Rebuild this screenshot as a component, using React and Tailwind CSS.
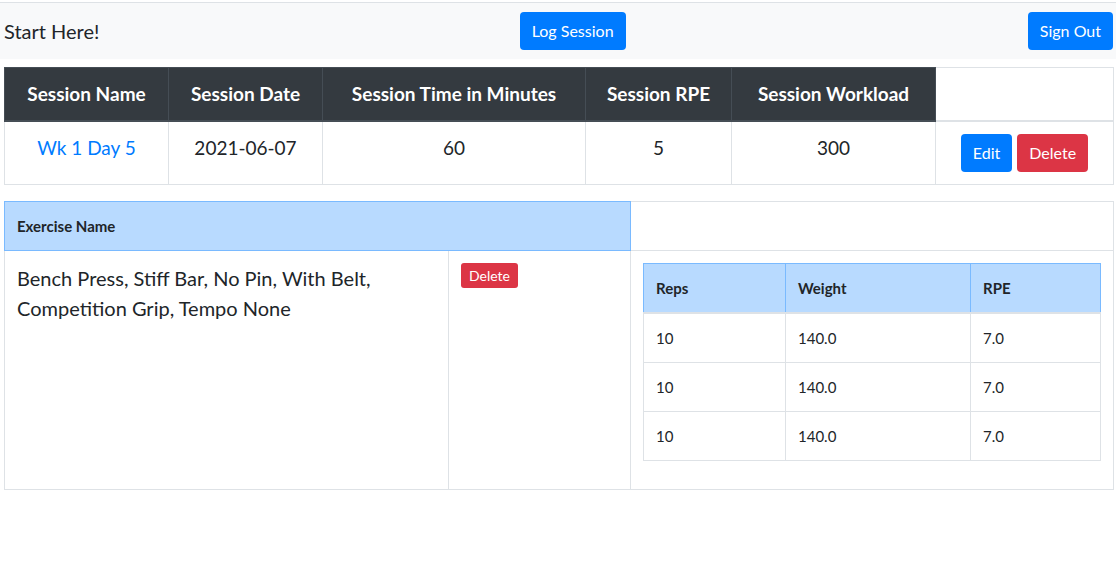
import React from "react";

const font = { fontFamily: "Lato, 'Noto Sans', sans-serif" };

export default function App() {
  const sets = [
    ["10", "140.0", "7.0"],
    ["10", "140.0", "7.0"],
    ["10", "140.0", "7.0"],
  ];
  return (
    <div style={font} className="min-h-[583px] bg-white text-[#212529]">
      <div className="mt-[2px] border-t border-[#dee2e6] bg-[#f8f9fa] h-[57px] pl-1 pr-[3px] flex items-center justify-between">
        <span className="text-[20px] leading-[30px]">Start Here!</span>
        <button className="h-[38px] px-3 rounded-[4px] bg-[#007bff] text-white text-[16px] leading-[24px] ml-[18px]">
          Log Session
        </button>
        <button className="h-[38px] px-3 rounded-[4px] bg-[#007bff] text-white text-[16px] leading-[24px]">
          Sign Out
        </button>
      </div>

      <div className="pl-1 pr-[3px] mt-2">
        <table className="w-[1109px] table-fixed border-collapse text-[19px] leading-[28px] mb-4">
          <colgroup>
            <col className="w-[164px]" />
            <col className="w-[154px]" />
            <col className="w-[263px]" />
            <col className="w-[146px]" />
            <col className="w-[204px]" />
            <col className="w-[178px]" />
          </colgroup>
          <thead>
            <tr>
              {["Session Name", "Session Date", "Session Time in Minutes", "Session RPE", "Session Workload"].map((h) => (
                <th
                  key={h}
                  className="bg-[#343a40] text-white font-bold p-3 border border-[#454d55] border-b-2 text-center align-top"
                >
                  {h}
                </th>
              ))}
              <th className="border border-[#dee2e6] border-b-2 p-3"></th>
            </tr>
          </thead>
          <tbody>
            <tr>
              <td className="border border-[#dee2e6] p-3 text-center align-top">
                <a className="text-[#007bff]">Wk 1 Day 5</a>
              </td>
              <td className="border border-[#dee2e6] p-3 text-center align-top">2021-06-07</td>
              <td className="border border-[#dee2e6] p-3 text-center align-top">60</td>
              <td className="border border-[#dee2e6] p-3 text-center align-top">5</td>
              <td className="border border-[#dee2e6] p-3 text-center align-top">300</td>
              <td className="border border-[#dee2e6] p-3 text-center align-top">
                <div className="flex justify-center gap-[5px]">
                  <button className="h-[38px] px-3 rounded-[4px] bg-[#007bff] text-white text-[16px] leading-[24px]">
                    Edit
                  </button>
                  <button className="h-[38px] px-3 rounded-[4px] bg-[#dc3545] text-white text-[16px] leading-[24px]">
                    Delete
                  </button>
                </div>
              </td>
            </tr>
          </tbody>
        </table>

        <table className="w-[1109px] table-fixed border-collapse text-[15px] leading-[24px]">
          <colgroup>
            <col className="w-[444px]" />
            <col className="w-[182px]" />
            <col className="w-[483px]" />
          </colgroup>
          <thead>
            <tr>
              <th colSpan={2} className="bg-[#b8daff] border border-[#7abaff] p-3 text-left font-bold">
                Exercise Name
              </th>
              <th className="border border-[#dee2e6] p-3"></th>
            </tr>
          </thead>
          <tbody>
            <tr>
              <td className="border border-[#dee2e6] p-3 align-top text-[20px] leading-[30px]">
                Bench Press, Stiff Bar, No Pin, With Belt, Competition Grip, Tempo None
              </td>
              <td className="border border-[#dee2e6] p-3 align-top">
                <button className="h-[25px] px-2 rounded-[3px] bg-[#dc3545] text-white text-[14px] leading-[25px]">
                  Delete
                </button>
              </td>
              <td className="border border-[#dee2e6] p-3 align-top">
                <table className="w-[457px] table-fixed border-collapse mb-4">
                  <colgroup>
                    <col className="w-[142px]" />
                    <col className="w-[185px]" />
                    <col className="w-[130px]" />
                  </colgroup>
                  <thead>
                    <tr>
                      {["Reps", "Weight", "RPE"].map((h) => (
                        <th
                          key={h}
                          className="bg-[#b8daff] border border-[#7abaff] border-b-2 border-b-[#dee2e6] p-3 text-left font-bold"
                        >
                          {h}
                        </th>
                      ))}
                    </tr>
                  </thead>
                  <tbody>
                    {sets.map((r, i) => (
                      <tr key={i}>
                        {r.map((c, j) => (
                          <td key={j} className="border border-[#dee2e6] p-3 align-top">
                            {c}
                          </td>
                        ))}
                      </tr>
                    ))}
                  </tbody>
                </table>
              </td>
            </tr>
          </tbody>
        </table>
      </div>
    </div>
  );
}
